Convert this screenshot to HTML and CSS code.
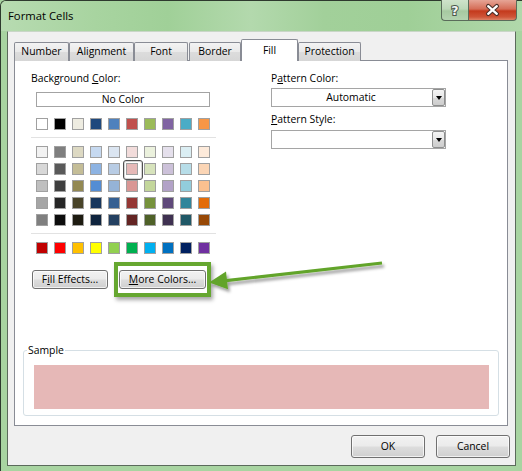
FILE: index.html
```html
<!DOCTYPE html>
<html>
<head>
<meta charset="utf-8">
<title>Format Cells</title>
<link rel="stylesheet" href="styles.css">
</head>
<body>
<div class="window">
  <div class="titlebar">
    <span class="title">Format Cells</span>
    <div class="caption-btns">
      <div class="cbtn help"><svg width="26" height="20" viewBox="0 0 26 20"><text x="13" y="14.5" text-anchor="middle" class="qmark">?</text></svg></div>
      <div class="cbtn close"><svg width="49" height="20" viewBox="0 0 49 20"><path d="M20 6 L29 14 M29 6 L20 14" stroke="#4a2e28" stroke-width="4.6" stroke-linecap="round"/><path d="M20 6 L29 14 M29 6 L20 14" stroke="#ffffff" stroke-width="2.4" stroke-linecap="round"/></svg></div>
    </div>
  </div>
  <div class="client">
    <div class="tabs">
      <div class="tab t-number">Number</div>
      <div class="tab t-align">Alignment</div>
      <div class="tab t-font">Font</div>
      <div class="tab t-border">Border</div>
      <div class="tab t-fill selected">Fill</div>
      <div class="tab t-prot">Protection</div>
    </div>
    <div class="panel">
      <div class="cols">
        <div class="left">
          <div class="label">Background <u>C</u>olor:</div>
          <div class="nocolor">No Color</div>
          <div class="swrow first">
            <span class="sw" style="background:#ffffff"></span><span class="sw" style="background:#000000"></span><span class="sw" style="background:#eeece1"></span><span class="sw" style="background:#1f497d"></span><span class="sw" style="background:#4f81bd"></span><span class="sw" style="background:#c0504d"></span><span class="sw" style="background:#9bbb59"></span><span class="sw" style="background:#8064a2"></span><span class="sw" style="background:#4bacc6"></span><span class="sw" style="background:#f79646"></span>
          </div>
          <div class="sep"></div>
          <div class="tints">
            <div class="swrow">
              <span class="sw" style="background:#f2f2f2"></span><span class="sw" style="background:#7f7f7f"></span><span class="sw" style="background:#ddd9c3"></span><span class="sw" style="background:#c6d9f0"></span><span class="sw" style="background:#dbe5f1"></span><span class="sw" style="background:#f2dcdb"></span><span class="sw" style="background:#ebf1dd"></span><span class="sw" style="background:#e5e0ec"></span><span class="sw" style="background:#dbeef3"></span><span class="sw" style="background:#fdeada"></span>
            </div>
            <div class="swrow">
              <span class="sw" style="background:#d8d8d8"></span><span class="sw" style="background:#595959"></span><span class="sw" style="background:#c4bd97"></span><span class="sw" style="background:#8db3e2"></span><span class="sw" style="background:#b8cce4"></span><span class="sw picked" style="background:#e6b9b8"></span><span class="sw" style="background:#d7e3bc"></span><span class="sw" style="background:#ccc1d9"></span><span class="sw" style="background:#b7dde8"></span><span class="sw" style="background:#fbd5b5"></span>
            </div>
            <div class="swrow">
              <span class="sw" style="background:#bfbfbf"></span><span class="sw" style="background:#3f3f3f"></span><span class="sw" style="background:#938953"></span><span class="sw" style="background:#548dd4"></span><span class="sw" style="background:#95b3d7"></span><span class="sw" style="background:#d99694"></span><span class="sw" style="background:#c3d69b"></span><span class="sw" style="background:#b2a2c7"></span><span class="sw" style="background:#92cddc"></span><span class="sw" style="background:#fac08f"></span>
            </div>
            <div class="swrow">
              <span class="sw" style="background:#a5a5a5"></span><span class="sw" style="background:#262626"></span><span class="sw" style="background:#494429"></span><span class="sw" style="background:#17365d"></span><span class="sw" style="background:#366092"></span><span class="sw" style="background:#953734"></span><span class="sw" style="background:#76923c"></span><span class="sw" style="background:#5f497a"></span><span class="sw" style="background:#31859b"></span><span class="sw" style="background:#e36c09"></span>
            </div>
            <div class="swrow">
              <span class="sw" style="background:#7f7f7f"></span><span class="sw" style="background:#0c0c0c"></span><span class="sw" style="background:#1d1b10"></span><span class="sw" style="background:#0f243e"></span><span class="sw" style="background:#244061"></span><span class="sw" style="background:#632423"></span><span class="sw" style="background:#4f6128"></span><span class="sw" style="background:#3f3151"></span><span class="sw" style="background:#205867"></span><span class="sw" style="background:#974806"></span>
            </div>
          </div>
          <div class="sep"></div>
          <div class="swrow">
            <span class="sw" style="background:#c00000"></span><span class="sw" style="background:#ff0000"></span><span class="sw" style="background:#ffc000"></span><span class="sw" style="background:#ffff00"></span><span class="sw" style="background:#92d050"></span><span class="sw" style="background:#00b050"></span><span class="sw" style="background:#00b0f0"></span><span class="sw" style="background:#0070c0"></span><span class="sw" style="background:#002060"></span><span class="sw" style="background:#7030a0"></span>
          </div>
          <div class="btnrow">
            <div class="btn fill-effects">F<u>i</u>ll Effects...</div>
            <div class="btn more-colors"><u>M</u>ore Colors...<span class="highlight"></span></div>
          </div>
        </div>
        <div class="right">
          <div class="label">P<u>a</u>ttern Color:</div>
          <div class="combo first-combo"><span class="combo-text">Automatic</span><span class="combo-btn"><span class="tri"></span></span></div>
          <div class="label second-label"><u>P</u>attern Style:</div>
          <div class="combo second-combo"><span class="combo-text"></span><span class="combo-btn"><span class="tri"></span></span></div>
        </div>
      </div>
      <fieldset class="sample">
        <legend>Sample</legend>
        <div class="sample-fill"></div>
      </fieldset>
    </div>
    <div class="footer">
      <div class="btn dlg">OK</div>
      <div class="btn dlg">Cancel</div>
    </div>
  </div>
  <svg class="arrow" width="522" height="471" viewBox="0 0 522 471">
    <defs>
      <filter id="shadow" x="-10%" y="-50%" width="130%" height="250%">
        <feDropShadow dx="2" dy="3" stdDeviation="1.6" flood-color="#000" flood-opacity="0.38"/>
      </filter>
    </defs>
    <g filter="url(#shadow)">
      <line x1="382" y1="263" x2="224" y2="280.8" stroke="#62a42c" stroke-width="3.2"/>
      <polygon points="209,282.5 226,271.6 228,289.2" fill="#62a42c"/>
    </g>
  </svg>
</div>
</body>
</html>
```
FILE: styles.css
```css
* { box-sizing: border-box; }
html, body { margin: 0; padding: 0; }
body {
  width: 522px;
  height: 471px;
  overflow: hidden;
  background: #a8d4a1;
  font-family: "Open Sans", "Noto Sans", sans-serif;
  font-size: 10.4px;
  color: #000;
}
.window {
  position: relative;
  width: 522px;
  height: 471px;
  display: flex;
  flex-direction: column;
  background: #a8d4a1;
  border-top: 1px solid #2e3a2e;
  border-left: 1px solid #2e3a2e;
  border-top-left-radius: 6px;
}
.titlebar {
  height: 30px;
  flex: none;
  display: flex;
  align-items: flex-start;
  background: linear-gradient(90deg, #b7dbb1 0%, #a8d4a0 18%, #a0d098 32%, #b3d9ad 48%, #a2d09a 62%, #9fcf97 78%, #b1d8ab 100%);
  border-top-left-radius: 5px;
}
.title {
  margin: 7px 0 0 7px;
  font-size: 11.3px;
  line-height: 16px;
  color: #000;
}
.caption-btns {
  margin-left: auto;
  margin-right: 5px;
  margin-top: -1px;
  display: flex;
}
.cbtn {
  height: 21px;
  border: 1px solid #5a6c5a;
  border-top: none;
  display: flex;
}
.cbtn svg { display: block; }
.help {
  width: 27px;
  border-radius: 0 0 0 4px;
  background: linear-gradient(#cfe3cb, #bcd8b8 45%, #a6c9a1 55%, #b4d3b0);
  border-right: none;
}
.close {
  width: 49px;
  border-radius: 0 0 4px 0;
  background: linear-gradient(#e6a596, #d56d57 45%, #c43a1d 55%, #cf5538 85%, #dd8467);
}
.qmark {
  font-family: "DejaVu Sans", sans-serif;
  font-weight: bold;
  font-size: 12.5px;
  fill: #f4f6f4;
  stroke: #4a564a;
  stroke-width: 2px;
  paint-order: stroke;
}
.client {
  margin-left: 6px;
  width: 509px;
  height: 435px;
  flex: none;
  background: #f0f0f0;
  border: 1px solid #5b6a5b;
  border-top-color: #c9d6c7;
}
.tabs {
  margin: 7px 0 0 6px;
  height: 22px;
  display: flex;
  align-items: flex-end;
}
.tab {
  height: 19px;
  border: 1px solid #898c95;
  border-bottom: none;
  border-radius: 2px 2px 0 0;
  background: linear-gradient(#f3f3f3, #e9e9e9 50%, #dcdcdc 52%, #d6d6d6);
  text-align: center;
  line-height: 17px;
}
.t-number { width: 55px; }
.t-align { width: 65px; }
.t-font { width: 54px; }
.t-border { width: 52px; margin-left: 1px; }
.t-fill { width: 57px; }
.t-prot { width: 63px; }
.tab.selected {
  height: 22px;
  background: #ffffff;
  position: relative;
  z-index: 2;
  padding-top: 2px;
}
.panel {
  margin: -1px 0 0 6px;
  width: 494px;
  height: 366px;
  background: #ffffff;
  border: 1px solid #898c95;
  display: flex;
  flex-direction: column;
}
.cols {
  display: flex;
  padding: 9px 0 0 16px;
}
.left { width: 185px; }
.right { width: 175px; margin-left: 55px; }
.label {
  line-height: 16px;
  height: 16px;
  white-space: nowrap;
}
.nocolor {
  margin: 6px 0 0 5px;
  width: 174px;
  height: 15px;
  border: 1px solid #a3a3a3;
  text-align: center;
  line-height: 13px;
}
.swrow {
  display: flex;
  gap: 6px;
  margin-left: 5px;
}
.swrow.first { margin-top: 11px; }
.sw {
  width: 12px;
  height: 12px;
  border: 1px solid #a0a0a0;
  display: block;
}
.sw.picked { position: relative; }
.sw.picked::after {
  content: "";
  position: absolute;
  left: -4px;
  top: -4px;
  width: 18px;
  height: 18px;
  border: 1px solid #505050;
  border-radius: 3px;
  box-shadow: inset 0 0 0 1px #d4d4d4;
}
.sep {
  width: 185px;
  height: 1px;
  background: #e2e2e2;
  margin: 7px 0 8px 0;
}
.tints {
  display: flex;
  flex-direction: column;
  gap: 5px;
}
.btnrow {
  display: flex;
  margin-top: 16px;
}
.btn {
  height: 19px;
  border: 1px solid #707070;
  border-radius: 3px;
  background: linear-gradient(#f2f2f2, #ebebeb 48%, #dddddd 52%, #cfcfcf);
  box-shadow: inset 0 0 0 1px rgba(255,255,255,0.7);
  text-align: center;
  line-height: 17px;
  white-space: nowrap;
}
.fill-effects { width: 76px; margin-left: 1px; }
.more-colors { width: 87px; margin-left: 11px; position: relative; }
.highlight {
  position: absolute;
  left: -6px;
  right: -6px;
  top: -9px;
  bottom: -9px;
  border: 4px solid #66a730;
  box-shadow: 2px 3px 4px rgba(0,0,0,0.35);
}
.combo {
  width: 175px;
  height: 19px;
  border: 1px solid #a5a5a5;
  background: #fff;
  display: flex;
  align-items: center;
}
.first-combo { margin-top: 2px; }
.second-label { margin-top: 4px; }
.second-combo { margin-top: 3px; }
.combo-text {
  flex: 1;
  text-align: center;
  line-height: 17px;
  padding-right: 2px;
}
.combo-btn {
  width: 13px;
  height: 17px;
  border: 1px solid #8e8f8f;
  border-radius: 2px;
  background: linear-gradient(#f4f4f4, #e8e8e8 50%, #d9d9d9 52%, #cdcdcd);
  display: flex;
  align-items: center;
  justify-content: center;
}
.tri {
  width: 0;
  height: 0;
  border-left: 3.5px solid transparent;
  border-right: 3.5px solid transparent;
  border-top: 4px solid #000;
}
.sample {
  margin: auto 8px 9px 8px;
  padding: 0 9px 6px 10px;
  min-width: 0;
  border: 1px solid #d5dfe5;
  border-radius: 3px;
}
.sample legend {
  padding: 0 1px;
  margin-left: -7px;
  line-height: 16px;
}
.sample-fill {
  margin-top: 7px;
  height: 44px;
  background: #e6b8b7;
}
.footer {
  display: flex;
  justify-content: flex-end;
  gap: 11px;
  margin-top: 9px;
  padding-right: 5px;
}
.btn.dlg {
  width: 74px;
  height: 23px;
  line-height: 21px;
}
.arrow {
  position: absolute;
  left: -1px;
  top: -1px;
  pointer-events: none;
}
```
